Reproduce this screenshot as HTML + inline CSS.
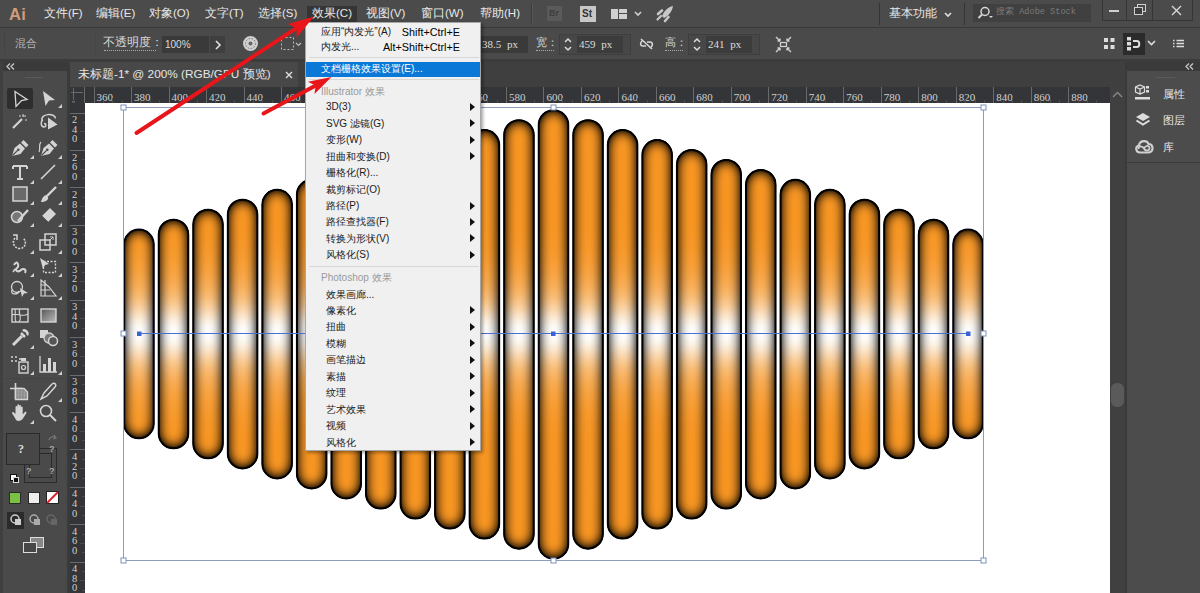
<!DOCTYPE html><html><head><meta charset="utf-8"><style>
*{margin:0;padding:0;box-sizing:border-box}
html,body{width:1200px;height:593px;overflow:hidden;background:#2e2e2e;font-family:"Liberation Sans",sans-serif;}
.abs{position:absolute}
.t{position:absolute;white-space:nowrap;line-height:1}
svg{position:absolute;overflow:visible}
.mi{position:absolute;white-space:nowrap;line-height:1;font-size:10px;color:#000}
.ar{position:absolute;width:0;height:0;border-top:4px solid transparent;border-bottom:4px solid transparent;border-left:5px solid #111}
.rl{position:absolute;font-family:"Liberation Serif",serif;font-size:11px;color:#d0d0d0;line-height:1}
</style></head><body>
<div class="abs" style="left:0;top:0;width:1200px;height:28px;background:#4b4b4b;border-bottom:1px solid #393939"></div>
<div class="t" style="left:9px;top:5.5px;font-size:16.5px;color:#d09c7c;font-weight:bold;letter-spacing:0.3px">Ai</div>
<div class="abs" style="left:307px;top:6px;width:50px;height:17px;background:#353535"></div>
<div class="t" style="left:44px;top:8px;font-size:11.5px;color:#e8e8e8">文件(F)</div>
<div class="t" style="left:96px;top:8px;font-size:11.5px;color:#e8e8e8">编辑(E)</div>
<div class="t" style="left:149px;top:8px;font-size:11.5px;color:#e8e8e8">对象(O)</div>
<div class="t" style="left:205px;top:8px;font-size:11.5px;color:#e8e8e8">文字(T)</div>
<div class="t" style="left:258px;top:8px;font-size:11.5px;color:#e8e8e8">选择(S)</div>
<div class="t" style="left:312px;top:8px;font-size:11.5px;color:#e8e8e8">效果(C)</div>
<div class="t" style="left:366px;top:8px;font-size:11.5px;color:#e8e8e8">视图(V)</div>
<div class="t" style="left:421px;top:8px;font-size:11.5px;color:#e8e8e8">窗口(W)</div>
<div class="t" style="left:480px;top:8px;font-size:11.5px;color:#e8e8e8">帮助(H)</div>
<div class="abs" style="left:531px;top:3px;width:1px;height:22px;background:#3c3c3c"></div><div class="abs" style="left:532px;top:3px;width:1px;height:22px;background:#585858"></div>
<div class="abs" style="left:547px;top:6px;width:15px;height:15px;background:#5a5a5a"></div><div class="t" style="left:549px;top:9px;font-size:9px;color:#3e3e3e;font-weight:bold">Br</div>
<div class="abs" style="left:580px;top:6px;width:16px;height:16px;background:#c8c8c8"></div><div class="t" style="left:582px;top:9px;font-size:10px;color:#333;font-weight:bold">St</div>
<div class="abs" style="left:611px;top:9px;width:7px;height:10px;background:#d0d0d0"></div><div class="abs" style="left:619px;top:9px;width:8px;height:4px;background:#d0d0d0"></div><div class="abs" style="left:619px;top:14px;width:8px;height:5px;background:#d0d0d0"></div>
<svg style="left:634px;top:11px" width="8" height="6"><path d="M1 1 L4 4 L7 1" stroke="#d0d0d0" stroke-width="1.6" fill="none"/></svg>
<svg style="left:656px;top:5px" width="18" height="18"><path d="M17 1 C12 2 8 6 6 11 L8 13 C12 11 16 7 17 1 Z" fill="#c8c8c8"/><path d="M2 9 L6 5.5" stroke="#c8c8c8" stroke-width="2.6" stroke-linecap="round"/><path d="M9 16 L12.5 12" stroke="#c8c8c8" stroke-width="2.6" stroke-linecap="round"/><path d="M1.5 14.5 L5 11" stroke="#c8c8c8" stroke-width="2.2" stroke-linecap="round"/></svg>
<div class="abs" style="left:879px;top:3px;width:1px;height:22px;background:#353535"></div>
<div class="t" style="left:889px;top:8px;font-size:11.5px;color:#e8e8e8">基本功能</div>
<svg style="left:944px;top:12px" width="8" height="6"><path d="M1 1 L4 4 L7 1" stroke="#e0e0e0" stroke-width="1.6" fill="none"/></svg>
<div class="abs" style="left:964px;top:3px;width:1px;height:22px;background:#353535"></div>
<div class="abs" style="left:973px;top:4px;width:118px;height:18px;background:#404040"></div>
<svg style="left:977px;top:6px" width="16" height="14"><circle cx="8" cy="5.5" r="4" stroke="#d8d8d8" stroke-width="1.5" fill="none"/><path d="M5 8.5 L1.5 12" stroke="#d8d8d8" stroke-width="1.8"/><path d="M12 10 L14 12 L16 10" fill="#d8d8d8"/></svg>
<div class="t" style="left:996px;top:8px;font-size:8.6px;color:#7a7a7a;font-family:'Liberation Mono',monospace">搜索 Adobe Stock</div>
<div class="abs" style="left:1102px;top:0;width:25px;height:21px;border:1px solid #363636;border-top:none"></div>
<div class="abs" style="left:1127px;top:0;width:26px;height:21px;border:1px solid #363636;border-top:none;border-left:none"></div>
<div class="abs" style="left:1153px;top:0;width:40px;height:21px;border:1px solid #363636;border-top:none;border-left:none"></div>
<div class="abs" style="left:1109px;top:10px;width:10px;height:2px;background:#cfcfcf"></div>
<svg style="left:1134px;top:4px" width="13" height="12"><rect x="3.5" y="0.5" width="8" height="7" stroke="#cfcfcf" fill="none"/><rect x="0.5" y="3.5" width="8" height="7" stroke="#cfcfcf" fill="#3e3e3e"/></svg>
<svg style="left:1171px;top:5px" width="11" height="11"><path d="M1 1 L10 10 M10 1 L1 10" stroke="#d8d8d8" stroke-width="1.4"/></svg>
<div class="abs" style="left:0;top:28px;width:1200px;height:31px;background:#4a4a4a"></div>
<div class="abs" style="left:0;top:59px;width:1200px;height:3px;background:#3c3c3c"></div>
<div class="abs" style="left:4px;top:32px;width:1px;height:23px;background:#444"></div>
<div class="t" style="left:15px;top:38px;font-size:11px;color:#b4b4b4;font-family:'Liberation Serif',serif">混合</div>
<div class="abs" style="left:95px;top:32px;width:1px;height:23px;background:#464646"></div>
<div class="t" style="left:103px;top:37px;font-size:11.5px;color:#d8d8d8;font-family:'Liberation Serif',serif">不透明度：</div>
<div class="abs" style="left:104px;top:50px;width:52px;height:1px;border-top:1px dotted #aaa"></div>
<div class="abs" style="left:162px;top:36px;width:47px;height:17px;background:#3a3a3a"></div>
<div class="t" style="left:165px;top:39.5px;font-size:10px;color:#dcdcdc">100%</div>
<div class="abs" style="left:210px;top:36px;width:15px;height:17px;background:#3f3f3f"></div>
<svg style="left:214px;top:40px" width="8" height="10"><path d="M2 1 L6 5 L2 9" stroke="#e0e0e0" stroke-width="1.6" fill="none"/></svg>
<svg style="left:242px;top:35px" width="17" height="17"><circle cx="8.5" cy="8.5" r="7.5" fill="#cfcfcf"/><circle cx="8.5" cy="8.5" r="5" fill="none" stroke="#777" stroke-width="1" stroke-dasharray="1.5 1.5"/><circle cx="8.5" cy="8.5" r="2" fill="#666"/></svg>
<svg style="left:280px;top:36px" width="22" height="16"><rect x="1.5" y="1.5" width="12" height="12" fill="none" stroke="#bbb" stroke-dasharray="2 2"/><path d="M16 7 L18.5 9.5 L21 7" stroke="#bbb" fill="none" stroke-width="1.2"/></svg>
<div class="abs" style="left:470px;top:36px;width:58px;height:17px;background:#3a3a3a"></div>
<div class="t" style="left:482px;top:39px;font-size:11px;color:#dcdcdc;font-family:'Liberation Serif',serif;word-spacing:3px">38.5 px</div>
<div class="t" style="left:536px;top:38px;font-size:10.5px;color:#d8d8d8;font-family:'Liberation Serif',serif">宽：</div>
<div class="abs" style="left:536px;top:50px;width:18px;height:1px;border-top:1px dotted #aaa"></div>
<div class="abs" style="left:559px;top:34px;width:72px;height:21px;border:1px solid #3e3e3e;background:#474747"></div>
<svg style="left:563px;top:37px" width="10" height="15"><path d="M2 5 L5 2 L8 5 M2 10 L5 13 L8 10" stroke="#dcdcdc" stroke-width="1.5" fill="none"/></svg>
<div class="abs" style="left:577px;top:36px;width:46px;height:17px;background:#3c3c3c"></div>
<div class="t" style="left:579px;top:39px;font-size:11px;color:#dcdcdc;font-family:'Liberation Serif',serif;word-spacing:3px">459 px</div>
<div class="t" style="left:665px;top:38px;font-size:10.5px;color:#d8d8d8;font-family:'Liberation Serif',serif">高：</div>
<div class="abs" style="left:665px;top:50px;width:18px;height:1px;border-top:1px dotted #aaa"></div>
<div class="abs" style="left:688px;top:34px;width:72px;height:21px;border:1px solid #3e3e3e;background:#474747"></div>
<svg style="left:692px;top:37px" width="10" height="15"><path d="M2 5 L5 2 L8 5 M2 10 L5 13 L8 10" stroke="#dcdcdc" stroke-width="1.5" fill="none"/></svg>
<div class="abs" style="left:706px;top:36px;width:46px;height:17px;background:#3c3c3c"></div>
<div class="t" style="left:708px;top:39px;font-size:11px;color:#dcdcdc;font-family:'Liberation Serif',serif;word-spacing:3px">241 px</div>
<svg style="left:639px;top:37px" width="15" height="14"><path d="M3 4 C1 6 1 9 4 9 L7 9 M8 5 L11 5 C14 5 14 9 12 10 M2 2 L13 12" stroke="#d8d8d8" stroke-width="1.6" fill="none"/></svg>
<svg style="left:775px;top:36px" width="17" height="17"><path d="M1 1 L5 5 M16 1 L12 5 M1 16 L5 12 M16 16 L12 12 M5 5 L5 2.5 M5 5 L2.5 5 M12 5 L14.5 5 M12 5 L12 2.5 M5 12 L5 14.5 M5 12 L2.5 12 M12 12 L14.5 12 M12 12 L12 14.5" stroke="#d0d0d0" stroke-width="1.4" fill="none"/><rect x="5.5" y="6.5" width="6" height="4" fill="none" stroke="#d0d0d0" stroke-width="1.3"/></svg>
<svg style="left:1104px;top:38px" width="11" height="12"><rect x="0" y="0" width="4" height="4" fill="#ddd"/><rect x="6.5" y="0" width="4" height="4" fill="#ddd"/><rect x="0" y="7" width="4" height="4" fill="#ddd"/><rect x="6.5" y="7" width="4" height="4" fill="#ddd"/></svg>
<div class="abs" style="left:1123px;top:33px;width:22px;height:22px;background:#2b2b2b"></div>
<svg style="left:1126px;top:37px" width="16" height="14"><rect x="1" y="0" width="4" height="3.5" fill="#ddd"/><rect x="1" y="5" width="4" height="3.5" fill="#ddd"/><rect x="1" y="10" width="4" height="3.5" fill="#ddd"/><path d="M7 4 L11 4 C14 4 14 10 11 10 L7 10" stroke="#ddd" stroke-width="2" fill="none"/></svg>
<svg style="left:1147px;top:40px" width="9" height="6"><path d="M1 1 L4.5 4.5 L8 1" stroke="#ddd" stroke-width="1.6" fill="none"/></svg>
<svg style="left:1172px;top:39px" width="13" height="10"><path d="M1 1.5h1.5M1 4.5h1.5M1 7.5h1.5M4.5 1.5h7.5M4.5 4.5h7.5M4.5 7.5h7.5" stroke="#ddd" stroke-width="1.4"/></svg>
<div class="abs" style="left:0;top:62px;width:67px;height:531px;background:#4a4a4a"></div>
<div class="abs" style="left:0;top:62px;width:67px;height:9px;background:#3a3a3a"></div>
<div class="abs" style="left:0;top:62px;width:3px;height:531px;background:#404040"></div>
<svg style="left:6px;top:63px" width="9" height="7"><path d="M4 0.5 L1 3.5 L4 6.5 M8 0.5 L5 3.5 L8 6.5" stroke="#c8c8c8" stroke-width="1.3" fill="none"/></svg>
<div class="abs" style="left:25px;top:77px;width:18px;height:1px;background:#5a5a5a"></div>
<div class="abs" style="left:7px;top:88px;width:26px;height:21px;background:#2e2e2e;border-radius:2px"></div>
<div class="abs" style="left:4px;top:378px;width:59px;height:1px;background:#444"></div>
<div class="abs" style="left:67px;top:62px;width:3px;height:531px;background:#3a3a3a"></div>
<div class="abs" style="left:70px;top:62px;width:1055px;height:25px;background:#3f3f3f"></div>
<div class="abs" style="left:70px;top:62px;width:228px;height:25px;background:#484848"></div>
<div class="t" style="left:78px;top:69px;font-size:11.8px;color:#e6e6e6">未标题-1* @ 200% (RGB/GPU 预览)</div>
<svg style="left:285px;top:71px" width="8" height="8"><path d="M1 1 L7 7 M7 1 L1 7" stroke="#e0e0e0" stroke-width="1.4"/></svg>
<div class="abs" style="left:70px;top:87px;width:1040px;height:16px;background:#333538"></div>
<div class="abs" style="left:70px;top:87px;width:15px;height:506px;background:#333538"></div>
<div class="abs" style="left:93.5px;top:87px;width:1px;height:16px;background:#6a6a6a"></div><div class="rl" style="left:96.5px;top:92px">360</div><div class="abs" style="left:102.9px;top:100px;width:1px;height:3px;background:#4c4c4c"></div><div class="abs" style="left:112.2px;top:98px;width:1px;height:5px;background:#4c4c4c"></div><div class="abs" style="left:121.6px;top:100px;width:1px;height:3px;background:#4c4c4c"></div><div class="abs" style="left:131.0px;top:87px;width:1px;height:16px;background:#6a6a6a"></div><div class="rl" style="left:134.0px;top:92px">380</div><div class="abs" style="left:140.4px;top:100px;width:1px;height:3px;background:#4c4c4c"></div><div class="abs" style="left:149.7px;top:98px;width:1px;height:5px;background:#4c4c4c"></div><div class="abs" style="left:159.1px;top:100px;width:1px;height:3px;background:#4c4c4c"></div><div class="abs" style="left:168.5px;top:87px;width:1px;height:16px;background:#6a6a6a"></div><div class="rl" style="left:171.5px;top:92px">400</div><div class="abs" style="left:177.9px;top:100px;width:1px;height:3px;background:#4c4c4c"></div><div class="abs" style="left:187.2px;top:98px;width:1px;height:5px;background:#4c4c4c"></div><div class="abs" style="left:196.6px;top:100px;width:1px;height:3px;background:#4c4c4c"></div><div class="abs" style="left:206.0px;top:87px;width:1px;height:16px;background:#6a6a6a"></div><div class="rl" style="left:209.0px;top:92px">420</div><div class="abs" style="left:215.3px;top:100px;width:1px;height:3px;background:#4c4c4c"></div><div class="abs" style="left:224.7px;top:98px;width:1px;height:5px;background:#4c4c4c"></div><div class="abs" style="left:234.1px;top:100px;width:1px;height:3px;background:#4c4c4c"></div><div class="abs" style="left:243.5px;top:87px;width:1px;height:16px;background:#6a6a6a"></div><div class="rl" style="left:246.5px;top:92px">440</div><div class="abs" style="left:252.8px;top:100px;width:1px;height:3px;background:#4c4c4c"></div><div class="abs" style="left:262.2px;top:98px;width:1px;height:5px;background:#4c4c4c"></div><div class="abs" style="left:271.6px;top:100px;width:1px;height:3px;background:#4c4c4c"></div><div class="abs" style="left:280.9px;top:87px;width:1px;height:16px;background:#6a6a6a"></div><div class="rl" style="left:283.9px;top:92px">460</div><div class="abs" style="left:290.3px;top:100px;width:1px;height:3px;background:#4c4c4c"></div><div class="abs" style="left:299.7px;top:98px;width:1px;height:5px;background:#4c4c4c"></div><div class="abs" style="left:309.1px;top:100px;width:1px;height:3px;background:#4c4c4c"></div><div class="abs" style="left:318.4px;top:87px;width:1px;height:16px;background:#6a6a6a"></div><div class="rl" style="left:321.4px;top:92px">480</div><div class="abs" style="left:327.8px;top:100px;width:1px;height:3px;background:#4c4c4c"></div><div class="abs" style="left:337.2px;top:98px;width:1px;height:5px;background:#4c4c4c"></div><div class="abs" style="left:346.6px;top:100px;width:1px;height:3px;background:#4c4c4c"></div><div class="abs" style="left:355.9px;top:87px;width:1px;height:16px;background:#6a6a6a"></div><div class="rl" style="left:358.9px;top:92px">500</div><div class="abs" style="left:365.3px;top:100px;width:1px;height:3px;background:#4c4c4c"></div><div class="abs" style="left:374.7px;top:98px;width:1px;height:5px;background:#4c4c4c"></div><div class="abs" style="left:384.0px;top:100px;width:1px;height:3px;background:#4c4c4c"></div><div class="abs" style="left:393.4px;top:87px;width:1px;height:16px;background:#6a6a6a"></div><div class="rl" style="left:396.4px;top:92px">520</div><div class="abs" style="left:402.8px;top:100px;width:1px;height:3px;background:#4c4c4c"></div><div class="abs" style="left:412.2px;top:98px;width:1px;height:5px;background:#4c4c4c"></div><div class="abs" style="left:421.5px;top:100px;width:1px;height:3px;background:#4c4c4c"></div><div class="abs" style="left:430.9px;top:87px;width:1px;height:16px;background:#6a6a6a"></div><div class="rl" style="left:433.9px;top:92px">540</div><div class="abs" style="left:440.3px;top:100px;width:1px;height:3px;background:#4c4c4c"></div><div class="abs" style="left:449.7px;top:98px;width:1px;height:5px;background:#4c4c4c"></div><div class="abs" style="left:459.0px;top:100px;width:1px;height:3px;background:#4c4c4c"></div><div class="abs" style="left:468.4px;top:87px;width:1px;height:16px;background:#6a6a6a"></div><div class="rl" style="left:471.4px;top:92px">560</div><div class="abs" style="left:477.8px;top:100px;width:1px;height:3px;background:#4c4c4c"></div><div class="abs" style="left:487.1px;top:98px;width:1px;height:5px;background:#4c4c4c"></div><div class="abs" style="left:496.5px;top:100px;width:1px;height:3px;background:#4c4c4c"></div><div class="abs" style="left:505.9px;top:87px;width:1px;height:16px;background:#6a6a6a"></div><div class="rl" style="left:508.9px;top:92px">580</div><div class="abs" style="left:515.3px;top:100px;width:1px;height:3px;background:#4c4c4c"></div><div class="abs" style="left:524.6px;top:98px;width:1px;height:5px;background:#4c4c4c"></div><div class="abs" style="left:534.0px;top:100px;width:1px;height:3px;background:#4c4c4c"></div><div class="abs" style="left:543.4px;top:87px;width:1px;height:16px;background:#6a6a6a"></div><div class="rl" style="left:546.4px;top:92px">600</div><div class="abs" style="left:552.8px;top:100px;width:1px;height:3px;background:#4c4c4c"></div><div class="abs" style="left:562.1px;top:98px;width:1px;height:5px;background:#4c4c4c"></div><div class="abs" style="left:571.5px;top:100px;width:1px;height:3px;background:#4c4c4c"></div><div class="abs" style="left:580.9px;top:87px;width:1px;height:16px;background:#6a6a6a"></div><div class="rl" style="left:583.9px;top:92px">620</div><div class="abs" style="left:590.2px;top:100px;width:1px;height:3px;background:#4c4c4c"></div><div class="abs" style="left:599.6px;top:98px;width:1px;height:5px;background:#4c4c4c"></div><div class="abs" style="left:609.0px;top:100px;width:1px;height:3px;background:#4c4c4c"></div><div class="abs" style="left:618.4px;top:87px;width:1px;height:16px;background:#6a6a6a"></div><div class="rl" style="left:621.4px;top:92px">640</div><div class="abs" style="left:627.7px;top:100px;width:1px;height:3px;background:#4c4c4c"></div><div class="abs" style="left:637.1px;top:98px;width:1px;height:5px;background:#4c4c4c"></div><div class="abs" style="left:646.5px;top:100px;width:1px;height:3px;background:#4c4c4c"></div><div class="abs" style="left:655.9px;top:87px;width:1px;height:16px;background:#6a6a6a"></div><div class="rl" style="left:658.9px;top:92px">660</div><div class="abs" style="left:665.2px;top:100px;width:1px;height:3px;background:#4c4c4c"></div><div class="abs" style="left:674.6px;top:98px;width:1px;height:5px;background:#4c4c4c"></div><div class="abs" style="left:684.0px;top:100px;width:1px;height:3px;background:#4c4c4c"></div><div class="abs" style="left:693.3px;top:87px;width:1px;height:16px;background:#6a6a6a"></div><div class="rl" style="left:696.3px;top:92px">680</div><div class="abs" style="left:702.7px;top:100px;width:1px;height:3px;background:#4c4c4c"></div><div class="abs" style="left:712.1px;top:98px;width:1px;height:5px;background:#4c4c4c"></div><div class="abs" style="left:721.5px;top:100px;width:1px;height:3px;background:#4c4c4c"></div><div class="abs" style="left:730.8px;top:87px;width:1px;height:16px;background:#6a6a6a"></div><div class="rl" style="left:733.8px;top:92px">700</div><div class="abs" style="left:740.2px;top:100px;width:1px;height:3px;background:#4c4c4c"></div><div class="abs" style="left:749.6px;top:98px;width:1px;height:5px;background:#4c4c4c"></div><div class="abs" style="left:758.9px;top:100px;width:1px;height:3px;background:#4c4c4c"></div><div class="abs" style="left:768.3px;top:87px;width:1px;height:16px;background:#6a6a6a"></div><div class="rl" style="left:771.3px;top:92px">720</div><div class="abs" style="left:777.7px;top:100px;width:1px;height:3px;background:#4c4c4c"></div><div class="abs" style="left:787.1px;top:98px;width:1px;height:5px;background:#4c4c4c"></div><div class="abs" style="left:796.4px;top:100px;width:1px;height:3px;background:#4c4c4c"></div><div class="abs" style="left:805.8px;top:87px;width:1px;height:16px;background:#6a6a6a"></div><div class="rl" style="left:808.8px;top:92px">740</div><div class="abs" style="left:815.2px;top:100px;width:1px;height:3px;background:#4c4c4c"></div><div class="abs" style="left:824.6px;top:98px;width:1px;height:5px;background:#4c4c4c"></div><div class="abs" style="left:833.9px;top:100px;width:1px;height:3px;background:#4c4c4c"></div><div class="abs" style="left:843.3px;top:87px;width:1px;height:16px;background:#6a6a6a"></div><div class="rl" style="left:846.3px;top:92px">760</div><div class="abs" style="left:852.7px;top:100px;width:1px;height:3px;background:#4c4c4c"></div><div class="abs" style="left:862.0px;top:98px;width:1px;height:5px;background:#4c4c4c"></div><div class="abs" style="left:871.4px;top:100px;width:1px;height:3px;background:#4c4c4c"></div><div class="abs" style="left:880.8px;top:87px;width:1px;height:16px;background:#6a6a6a"></div><div class="rl" style="left:883.8px;top:92px">780</div><div class="abs" style="left:890.2px;top:100px;width:1px;height:3px;background:#4c4c4c"></div><div class="abs" style="left:899.5px;top:98px;width:1px;height:5px;background:#4c4c4c"></div><div class="abs" style="left:908.9px;top:100px;width:1px;height:3px;background:#4c4c4c"></div><div class="abs" style="left:918.3px;top:87px;width:1px;height:16px;background:#6a6a6a"></div><div class="rl" style="left:921.3px;top:92px">800</div><div class="abs" style="left:927.7px;top:100px;width:1px;height:3px;background:#4c4c4c"></div><div class="abs" style="left:937.0px;top:98px;width:1px;height:5px;background:#4c4c4c"></div><div class="abs" style="left:946.4px;top:100px;width:1px;height:3px;background:#4c4c4c"></div><div class="abs" style="left:955.8px;top:87px;width:1px;height:16px;background:#6a6a6a"></div><div class="rl" style="left:958.8px;top:92px">820</div><div class="abs" style="left:965.1px;top:100px;width:1px;height:3px;background:#4c4c4c"></div><div class="abs" style="left:974.5px;top:98px;width:1px;height:5px;background:#4c4c4c"></div><div class="abs" style="left:983.9px;top:100px;width:1px;height:3px;background:#4c4c4c"></div><div class="abs" style="left:993.3px;top:87px;width:1px;height:16px;background:#6a6a6a"></div><div class="rl" style="left:996.3px;top:92px">840</div><div class="abs" style="left:1002.6px;top:100px;width:1px;height:3px;background:#4c4c4c"></div><div class="abs" style="left:1012.0px;top:98px;width:1px;height:5px;background:#4c4c4c"></div><div class="abs" style="left:1021.4px;top:100px;width:1px;height:3px;background:#4c4c4c"></div><div class="abs" style="left:1030.8px;top:87px;width:1px;height:16px;background:#6a6a6a"></div><div class="rl" style="left:1033.8px;top:92px">860</div><div class="abs" style="left:1040.1px;top:100px;width:1px;height:3px;background:#4c4c4c"></div><div class="abs" style="left:1049.5px;top:98px;width:1px;height:5px;background:#4c4c4c"></div><div class="abs" style="left:1058.9px;top:100px;width:1px;height:3px;background:#4c4c4c"></div><div class="abs" style="left:1068.2px;top:87px;width:1px;height:16px;background:#6a6a6a"></div><div class="rl" style="left:1071.2px;top:92px">880</div><div class="abs" style="left:1077.6px;top:100px;width:1px;height:3px;background:#4c4c4c"></div><div class="abs" style="left:1087.0px;top:98px;width:1px;height:5px;background:#4c4c4c"></div><div class="abs" style="left:1096.4px;top:100px;width:1px;height:3px;background:#4c4c4c"></div><div class="abs" style="left:70px;top:112.6px;width:15px;height:1px;background:#6a6a6a"></div><div class="rl" style="left:72px;top:115.1px;font-size:10.5px">2</div><div class="rl" style="left:72px;top:124.7px;font-size:10.5px">4</div><div class="rl" style="left:72px;top:134.3px;font-size:10.5px">0</div><div class="abs" style="left:82px;top:122.0px;width:3px;height:1px;background:#4c4c4c"></div><div class="abs" style="left:80px;top:131.3px;width:5px;height:1px;background:#4c4c4c"></div><div class="abs" style="left:82px;top:140.7px;width:3px;height:1px;background:#4c4c4c"></div><div class="abs" style="left:70px;top:150.0px;width:15px;height:1px;background:#6a6a6a"></div><div class="rl" style="left:72px;top:152.5px;font-size:10.5px">2</div><div class="rl" style="left:72px;top:162.1px;font-size:10.5px">6</div><div class="rl" style="left:72px;top:171.7px;font-size:10.5px">0</div><div class="abs" style="left:82px;top:159.4px;width:3px;height:1px;background:#4c4c4c"></div><div class="abs" style="left:80px;top:168.7px;width:5px;height:1px;background:#4c4c4c"></div><div class="abs" style="left:82px;top:178.1px;width:3px;height:1px;background:#4c4c4c"></div><div class="abs" style="left:70px;top:187.4px;width:15px;height:1px;background:#6a6a6a"></div><div class="rl" style="left:72px;top:189.9px;font-size:10.5px">2</div><div class="rl" style="left:72px;top:199.5px;font-size:10.5px">8</div><div class="rl" style="left:72px;top:209.1px;font-size:10.5px">0</div><div class="abs" style="left:82px;top:196.8px;width:3px;height:1px;background:#4c4c4c"></div><div class="abs" style="left:80px;top:206.2px;width:5px;height:1px;background:#4c4c4c"></div><div class="abs" style="left:82px;top:215.5px;width:3px;height:1px;background:#4c4c4c"></div><div class="abs" style="left:70px;top:224.9px;width:15px;height:1px;background:#6a6a6a"></div><div class="rl" style="left:72px;top:227.4px;font-size:10.5px">3</div><div class="rl" style="left:72px;top:237.0px;font-size:10.5px">0</div><div class="rl" style="left:72px;top:246.6px;font-size:10.5px">0</div><div class="abs" style="left:82px;top:234.2px;width:3px;height:1px;background:#4c4c4c"></div><div class="abs" style="left:80px;top:243.6px;width:5px;height:1px;background:#4c4c4c"></div><div class="abs" style="left:82px;top:252.9px;width:3px;height:1px;background:#4c4c4c"></div><div class="abs" style="left:70px;top:262.3px;width:15px;height:1px;background:#6a6a6a"></div><div class="rl" style="left:72px;top:264.8px;font-size:10.5px">3</div><div class="rl" style="left:72px;top:274.4px;font-size:10.5px">2</div><div class="rl" style="left:72px;top:284.0px;font-size:10.5px">0</div><div class="abs" style="left:82px;top:271.6px;width:3px;height:1px;background:#4c4c4c"></div><div class="abs" style="left:80px;top:281.0px;width:5px;height:1px;background:#4c4c4c"></div><div class="abs" style="left:82px;top:290.4px;width:3px;height:1px;background:#4c4c4c"></div><div class="abs" style="left:70px;top:299.7px;width:15px;height:1px;background:#6a6a6a"></div><div class="rl" style="left:72px;top:302.2px;font-size:10.5px">3</div><div class="rl" style="left:72px;top:311.8px;font-size:10.5px">4</div><div class="rl" style="left:72px;top:321.4px;font-size:10.5px">0</div><div class="abs" style="left:82px;top:309.1px;width:3px;height:1px;background:#4c4c4c"></div><div class="abs" style="left:80px;top:318.4px;width:5px;height:1px;background:#4c4c4c"></div><div class="abs" style="left:82px;top:327.8px;width:3px;height:1px;background:#4c4c4c"></div><div class="abs" style="left:70px;top:337.1px;width:15px;height:1px;background:#6a6a6a"></div><div class="rl" style="left:72px;top:339.6px;font-size:10.5px">3</div><div class="rl" style="left:72px;top:349.2px;font-size:10.5px">6</div><div class="rl" style="left:72px;top:358.8px;font-size:10.5px">0</div><div class="abs" style="left:82px;top:346.5px;width:3px;height:1px;background:#4c4c4c"></div><div class="abs" style="left:80px;top:355.8px;width:5px;height:1px;background:#4c4c4c"></div><div class="abs" style="left:82px;top:365.2px;width:3px;height:1px;background:#4c4c4c"></div><div class="abs" style="left:70px;top:374.5px;width:15px;height:1px;background:#6a6a6a"></div><div class="rl" style="left:72px;top:377.0px;font-size:10.5px">3</div><div class="rl" style="left:72px;top:386.6px;font-size:10.5px">8</div><div class="rl" style="left:72px;top:396.2px;font-size:10.5px">0</div><div class="abs" style="left:82px;top:383.9px;width:3px;height:1px;background:#4c4c4c"></div><div class="abs" style="left:80px;top:393.3px;width:5px;height:1px;background:#4c4c4c"></div><div class="abs" style="left:82px;top:402.6px;width:3px;height:1px;background:#4c4c4c"></div><div class="abs" style="left:70px;top:412.0px;width:15px;height:1px;background:#6a6a6a"></div><div class="rl" style="left:72px;top:414.5px;font-size:10.5px">4</div><div class="rl" style="left:72px;top:424.1px;font-size:10.5px">0</div><div class="rl" style="left:72px;top:433.7px;font-size:10.5px">0</div><div class="abs" style="left:82px;top:421.3px;width:3px;height:1px;background:#4c4c4c"></div><div class="abs" style="left:80px;top:430.7px;width:5px;height:1px;background:#4c4c4c"></div><div class="abs" style="left:82px;top:440.0px;width:3px;height:1px;background:#4c4c4c"></div><div class="abs" style="left:70px;top:449.4px;width:15px;height:1px;background:#6a6a6a"></div><div class="rl" style="left:72px;top:451.9px;font-size:10.5px">4</div><div class="rl" style="left:72px;top:461.5px;font-size:10.5px">2</div><div class="rl" style="left:72px;top:471.1px;font-size:10.5px">0</div><div class="abs" style="left:82px;top:458.7px;width:3px;height:1px;background:#4c4c4c"></div><div class="abs" style="left:80px;top:468.1px;width:5px;height:1px;background:#4c4c4c"></div><div class="abs" style="left:82px;top:477.5px;width:3px;height:1px;background:#4c4c4c"></div><div class="abs" style="left:70px;top:486.8px;width:15px;height:1px;background:#6a6a6a"></div><div class="rl" style="left:72px;top:489.3px;font-size:10.5px">4</div><div class="rl" style="left:72px;top:498.9px;font-size:10.5px">4</div><div class="rl" style="left:72px;top:508.5px;font-size:10.5px">0</div><div class="abs" style="left:82px;top:496.2px;width:3px;height:1px;background:#4c4c4c"></div><div class="abs" style="left:80px;top:505.5px;width:5px;height:1px;background:#4c4c4c"></div><div class="abs" style="left:82px;top:514.9px;width:3px;height:1px;background:#4c4c4c"></div><div class="abs" style="left:70px;top:524.2px;width:15px;height:1px;background:#6a6a6a"></div><div class="rl" style="left:72px;top:526.7px;font-size:10.5px">4</div><div class="rl" style="left:72px;top:536.3px;font-size:10.5px">6</div><div class="rl" style="left:72px;top:545.9px;font-size:10.5px">0</div><div class="abs" style="left:82px;top:533.6px;width:3px;height:1px;background:#4c4c4c"></div><div class="abs" style="left:80px;top:542.9px;width:5px;height:1px;background:#4c4c4c"></div><div class="abs" style="left:82px;top:552.3px;width:3px;height:1px;background:#4c4c4c"></div><div class="abs" style="left:70px;top:561.6px;width:15px;height:1px;background:#6a6a6a"></div><div class="rl" style="left:72px;top:564.1px;font-size:10.5px">4</div><div class="rl" style="left:72px;top:573.7px;font-size:10.5px">8</div><div class="rl" style="left:72px;top:583.3px;font-size:10.5px">0</div><div class="abs" style="left:82px;top:571.0px;width:3px;height:1px;background:#4c4c4c"></div><div class="abs" style="left:80px;top:580.4px;width:5px;height:1px;background:#4c4c4c"></div><div class="abs" style="left:82px;top:589.7px;width:3px;height:1px;background:#4c4c4c"></div>
<div class="abs" style="left:70px;top:87px;width:15px;height:16px;background:#333538"></div>
<svg style="left:70px;top:87px" width="15" height="16"><path d="M3.5 1 V13 M1 5.5 H13 M14.5 0 V16" stroke="#6a6a6a" stroke-width="1"/><path d="M2 14.5 Q3.5 16 5 14.5" stroke="#888" stroke-width="1" fill="none"/></svg>
<div class="abs" style="left:85px;top:103px;width:1025px;height:490px;background:#ffffff"></div>
<div class="abs" style="left:1110px;top:87px;width:15px;height:506px;background:#404040"></div>
<svg style="left:1112px;top:90px" width="11" height="10"><path d="M1 7 L5.5 2.5 L10 7" stroke="#888" stroke-width="1.3" fill="none"/></svg>
<div class="abs" style="left:1111px;top:383px;width:13px;height:24px;background:#5a5a5a;border-radius:6px"></div>
<div class="abs" style="left:1125px;top:62px;width:2px;height:531px;background:#3a3a3a"></div>
<div class="abs" style="left:1127px;top:62px;width:73px;height:531px;background:#4c4c4c"></div>
<div class="abs" style="left:1127px;top:62px;width:73px;height:9px;background:#3a3a3a"></div>
<svg style="left:1185px;top:63px" width="9" height="7"><path d="M4 0.5 L1 3.5 L4 6.5 M8 0.5 L5 3.5 L8 6.5" stroke="#c8c8c8" stroke-width="1.3" fill="none"/></svg>
<div class="abs" style="left:1155px;top:77px;width:20px;height:1px;background:#5a5a5a"></div>
<div class="abs" style="left:1127px;top:162px;width:73px;height:1px;background:#3a3a3a"></div>
<div class="t" style="left:1163px;top:89px;font-size:11.2px;color:#e8e8e8">属性</div>
<div class="t" style="left:1163px;top:115px;font-size:11.2px;color:#e8e8e8">图层</div>
<div class="t" style="left:1163px;top:141.5px;font-size:11.2px;color:#e8e8e8">库</div>
<svg style="left:1135px;top:84px" width="16" height="18"><path d="M5 1 L9.5 3 L9.5 8 L5 10 L0.5 8 L0.5 3 Z M0.5 3 L5 5 L9.5 3 M5 5 V10" stroke="#ddd" stroke-width="1.2" fill="none"/><rect x="11" y="2" width="3" height="2.5" fill="#ddd"/><rect x="11" y="6" width="3" height="2.5" fill="#ddd"/><rect x="0" y="13" width="15" height="2.5" fill="#ddd"/></svg>
<svg style="left:1135px;top:112px" width="16" height="16"><path d="M8 1 L15 5 L8 9 L1 5 Z" fill="#ddd"/><path d="M1.5 8.5 L8 12.5 L14.5 8.5" stroke="#ddd" stroke-width="2" fill="none"/></svg>
<svg style="left:1134px;top:139px" width="20" height="15"><path d="M6 13.5 C1.5 13.5 0.8 7 5 6.5 C5.5 1.5 13 0.5 14.5 5 C19.5 4.5 20 12.5 15 13.5 Z" stroke="#d0d0d0" stroke-width="2.2" fill="none"/><path d="M4.5 10 C4.5 6.5 8.5 6.5 10 9.5 C11.5 12.5 15.5 12 15.5 9 C15.5 6 11.5 6 10 9.5" stroke="#d0d0d0" stroke-width="1.8" fill="none"/></svg>
<svg width="1200" height="593" style="left:0;top:0" viewBox="0 0 1200 593"><defs>
<linearGradient id="vg" x1="0" y1="0" x2="0" y2="593" gradientUnits="userSpaceOnUse"><stop offset="0.0000" stop-color="#f99622"/><stop offset="0.3761" stop-color="#f99724"/><stop offset="0.3845" stop-color="#f99724"/><stop offset="0.3929" stop-color="#f99825"/><stop offset="0.4013" stop-color="#f99827"/><stop offset="0.4098" stop-color="#f99929"/><stop offset="0.4182" stop-color="#f99a2b"/><stop offset="0.4266" stop-color="#f99c2e"/><stop offset="0.4351" stop-color="#f99d32"/><stop offset="0.4435" stop-color="#faa036"/><stop offset="0.4519" stop-color="#faa23c"/><stop offset="0.4604" stop-color="#faa542"/><stop offset="0.4688" stop-color="#faa94a"/><stop offset="0.4772" stop-color="#faad53"/><stop offset="0.4857" stop-color="#fbb25e"/><stop offset="0.4941" stop-color="#fbb96b"/><stop offset="0.5025" stop-color="#fbc07b"/><stop offset="0.5110" stop-color="#fcca8e"/><stop offset="0.5194" stop-color="#fdd4a5"/><stop offset="0.5278" stop-color="#fde0be"/><stop offset="0.5363" stop-color="#feecd6"/><stop offset="0.5447" stop-color="#fef6eb"/><stop offset="0.5531" stop-color="#fffdfa"/><stop offset="0.5616" stop-color="#ffffff"/><stop offset="0.5700" stop-color="#fffdfa"/><stop offset="0.5784" stop-color="#fef6eb"/><stop offset="0.5868" stop-color="#feecd6"/><stop offset="0.5953" stop-color="#fde0be"/><stop offset="0.6037" stop-color="#fdd4a5"/><stop offset="0.6121" stop-color="#fcca8e"/><stop offset="0.6206" stop-color="#fbc07b"/><stop offset="0.6290" stop-color="#fbb96b"/><stop offset="0.6374" stop-color="#fbb25e"/><stop offset="0.6459" stop-color="#faad53"/><stop offset="0.6543" stop-color="#faa94a"/><stop offset="0.6627" stop-color="#faa542"/><stop offset="0.6712" stop-color="#faa23c"/><stop offset="0.6796" stop-color="#faa036"/><stop offset="0.6880" stop-color="#f99d32"/><stop offset="0.6965" stop-color="#f99c2e"/><stop offset="0.7049" stop-color="#f99a2b"/><stop offset="0.7133" stop-color="#f99929"/><stop offset="0.7218" stop-color="#f99827"/><stop offset="0.7302" stop-color="#f99825"/><stop offset="0.7386" stop-color="#f99724"/><stop offset="0.7470" stop-color="#f99724"/><stop offset="1.0000" stop-color="#f99622"/></linearGradient>
<filter id="ig" x="-20%" y="-20%" width="140%" height="140%" color-interpolation-filters="sRGB">
<feGaussianBlur in="SourceAlpha" stdDeviation="6.5" result="b"/>
<feComposite in="SourceAlpha" in2="b" operator="arithmetic" k2="1.6" k3="-1.6" result="e"/>
<feFlood flood-color="#000" flood-opacity="1"/>
<feComposite in2="e" operator="in" result="s"/>
<feMerge><feMergeNode in="SourceGraphic"/><feMergeNode in="s"/></feMerge>
</filter>
</defs><rect x="124.20" y="229.60" width="29.50" height="208.70" rx="14.75" fill="url(#vg)" stroke="#0c0c30" stroke-width="2" filter="url(#ig)"/><rect x="158.75" y="219.65" width="29.50" height="228.68" rx="14.75" fill="url(#vg)" stroke="#000" stroke-width="2" filter="url(#ig)"/><rect x="193.29" y="209.70" width="29.50" height="248.66" rx="14.75" fill="url(#vg)" stroke="#000" stroke-width="2" filter="url(#ig)"/><rect x="227.84" y="199.75" width="29.50" height="268.64" rx="14.75" fill="url(#vg)" stroke="#000" stroke-width="2" filter="url(#ig)"/><rect x="262.38" y="189.80" width="29.50" height="288.62" rx="14.75" fill="url(#vg)" stroke="#000" stroke-width="2" filter="url(#ig)"/><rect x="296.93" y="179.85" width="29.50" height="308.60" rx="14.75" fill="url(#vg)" stroke="#000" stroke-width="2" filter="url(#ig)"/><rect x="331.48" y="169.90" width="29.50" height="328.58" rx="14.75" fill="url(#vg)" stroke="#000" stroke-width="2" filter="url(#ig)"/><rect x="366.02" y="159.95" width="29.50" height="348.56" rx="14.75" fill="url(#vg)" stroke="#000" stroke-width="2" filter="url(#ig)"/><rect x="400.57" y="150.00" width="29.50" height="368.54" rx="14.75" fill="url(#vg)" stroke="#000" stroke-width="2" filter="url(#ig)"/><rect x="435.11" y="140.05" width="29.50" height="388.52" rx="14.75" fill="url(#vg)" stroke="#000" stroke-width="2" filter="url(#ig)"/><rect x="469.66" y="130.10" width="29.50" height="408.50" rx="14.75" fill="url(#vg)" stroke="#000" stroke-width="2" filter="url(#ig)"/><rect x="504.21" y="120.15" width="29.50" height="428.48" rx="14.75" fill="url(#vg)" stroke="#000" stroke-width="2" filter="url(#ig)"/><rect x="538.75" y="110.20" width="29.50" height="448.46" rx="14.75" fill="url(#vg)" stroke="#0c0c30" stroke-width="2" filter="url(#ig)"/><rect x="573.30" y="120.15" width="29.50" height="428.48" rx="14.75" fill="url(#vg)" stroke="#000" stroke-width="2" filter="url(#ig)"/><rect x="607.84" y="130.10" width="29.50" height="408.50" rx="14.75" fill="url(#vg)" stroke="#000" stroke-width="2" filter="url(#ig)"/><rect x="642.39" y="140.05" width="29.50" height="388.52" rx="14.75" fill="url(#vg)" stroke="#000" stroke-width="2" filter="url(#ig)"/><rect x="676.94" y="150.00" width="29.50" height="368.54" rx="14.75" fill="url(#vg)" stroke="#000" stroke-width="2" filter="url(#ig)"/><rect x="711.48" y="159.95" width="29.50" height="348.56" rx="14.75" fill="url(#vg)" stroke="#000" stroke-width="2" filter="url(#ig)"/><rect x="746.03" y="169.90" width="29.50" height="328.58" rx="14.75" fill="url(#vg)" stroke="#000" stroke-width="2" filter="url(#ig)"/><rect x="780.57" y="179.85" width="29.50" height="308.60" rx="14.75" fill="url(#vg)" stroke="#000" stroke-width="2" filter="url(#ig)"/><rect x="815.12" y="189.80" width="29.50" height="288.62" rx="14.75" fill="url(#vg)" stroke="#000" stroke-width="2" filter="url(#ig)"/><rect x="849.67" y="199.75" width="29.50" height="268.64" rx="14.75" fill="url(#vg)" stroke="#000" stroke-width="2" filter="url(#ig)"/><rect x="884.21" y="209.70" width="29.50" height="248.66" rx="14.75" fill="url(#vg)" stroke="#000" stroke-width="2" filter="url(#ig)"/><rect x="918.76" y="219.65" width="29.50" height="228.68" rx="14.75" fill="url(#vg)" stroke="#000" stroke-width="2" filter="url(#ig)"/><rect x="953.30" y="229.60" width="29.50" height="208.70" rx="14.75" fill="url(#vg)" stroke="#0c0c30" stroke-width="2" filter="url(#ig)"/><rect x="123.5" y="107.5" width="860" height="453" fill="none" stroke="#8d9cb8" stroke-width="1"/><path d="M139 333.5 H968" stroke="#4a6fd0" stroke-width="1"/><rect x="121.0" y="105.0" width="5" height="5" fill="#fff" stroke="#7d92bd" stroke-width="1"/><rect x="551.0" y="105.0" width="5" height="5" fill="#fff" stroke="#7d92bd" stroke-width="1"/><rect x="981.0" y="105.0" width="5" height="5" fill="#fff" stroke="#7d92bd" stroke-width="1"/><rect x="121.0" y="331.0" width="5" height="5" fill="#fff" stroke="#7d92bd" stroke-width="1"/><rect x="981.0" y="331.0" width="5" height="5" fill="#fff" stroke="#7d92bd" stroke-width="1"/><rect x="121.0" y="558.0" width="5" height="5" fill="#fff" stroke="#7d92bd" stroke-width="1"/><rect x="551.0" y="558.0" width="5" height="5" fill="#fff" stroke="#7d92bd" stroke-width="1"/><rect x="981.0" y="558.0" width="5" height="5" fill="#fff" stroke="#7d92bd" stroke-width="1"/><rect x="137" y="331.5" width="4.5" height="4.5" fill="#3a62d6"/><rect x="551" y="331.5" width="4.5" height="4.5" fill="#3a62d6"/><rect x="966" y="331.5" width="4.5" height="4.5" fill="#3a62d6"/></svg>
<svg style="left:13px;top:90px" width="16" height="18"><path d="M2 1.5 L14 9.5 L8.5 10.5 L3 16.5 Z" fill="none" stroke="#d4d4d4" stroke-width="1.3"/></svg><svg style="left:41px;top:90px" width="16" height="17"><path d="M2 1 L14 10 L8 10.5 L4.5 16 Z" fill="#d4d4d4"/></svg><svg style="left:58px;top:104px" width="4" height="4"><path d="M4 0 L4 4 L0 4 Z" fill="#cfcfcf"/></svg><svg style="left:11px;top:113px" width="17" height="17"><path d="M2 15 L11 6" stroke="#d4d4d4" stroke-width="2.2"/><path d="M12 1v3M15 3h-3M8 3h2M14 7h2" stroke="#d4d4d4" stroke-width="1"/></svg><svg style="left:38px;top:112px" width="21" height="19"><path d="M4 8.5 C2 1.5 17 0.5 17.5 6.5" stroke="#d4d4d4" stroke-width="1.5" fill="none"/><path d="M5 8 C2.5 9 2.5 15 6 15 C8.5 15 8.5 11.5 6 11.5" stroke="#d4d4d4" stroke-width="1.4" fill="none"/><path d="M10 5.5 L19.5 12.5 L10 17.5 Z" fill="#d4d4d4"/></svg><svg style="left:11px;top:139px" width="19" height="18"><path d="M1 17 L3.5 9 L9 4.5 L14 9.5 L9.5 15 Z" fill="#d4d4d4"/><path d="M1.5 16.5 L6.5 11.5" stroke="#4a4a4a" stroke-width="1.1"/><circle cx="7.3" cy="10.7" r="1.3" fill="#4a4a4a"/><path d="M10 3.5 L12.5 1 L17.5 6 L15 8.5 Z" fill="#d4d4d4"/></svg><svg style="left:30px;top:155px" width="4" height="4"><path d="M4 0 L4 4 L0 4 Z" fill="#cfcfcf"/></svg><svg style="left:37px;top:139px" width="21" height="18"><path d="M4 17 L6.5 9 L12 4.5 L17 9.5 L12.5 15 Z" fill="#d4d4d4"/><path d="M4.5 16.5 L9.5 11.5" stroke="#4a4a4a" stroke-width="1.1"/><circle cx="10.3" cy="10.7" r="1.3" fill="#4a4a4a"/><path d="M13 3.5 L15.5 1 L20.5 6 L18 8.5 Z" fill="#d4d4d4"/><path d="M4 3 C1 6 4 9 2 13" stroke="#d4d4d4" stroke-width="1.2" fill="none"/></svg><svg style="left:58px;top:155px" width="4" height="4"><path d="M4 0 L4 4 L0 4 Z" fill="#cfcfcf"/></svg><svg style="left:12px;top:164px" width="16" height="16"><path d="M1 2 H15 M8 2 V15 M5 15 H11 M1 2 V5 M15 2 V5" stroke="#d4d4d4" stroke-width="2" fill="none"/></svg><svg style="left:30px;top:180px" width="4" height="4"><path d="M4 0 L4 4 L0 4 Z" fill="#cfcfcf"/></svg><svg style="left:40px;top:164px" width="16" height="16"><path d="M1 15 L15 1" stroke="#d4d4d4" stroke-width="1.6"/></svg><svg style="left:58px;top:180px" width="4" height="4"><path d="M4 0 L4 4 L0 4 Z" fill="#cfcfcf"/></svg><svg style="left:12px;top:186px" width="16" height="16"><rect x="1" y="1" width="14" height="14" fill="#6a6a6a" stroke="#d4d4d4" stroke-width="1.5"/></svg><svg style="left:30px;top:201px" width="4" height="4"><path d="M4 0 L4 4 L0 4 Z" fill="#cfcfcf"/></svg><svg style="left:40px;top:186px" width="17" height="17"><path d="M16 1 L7 10" stroke="#d4d4d4" stroke-width="2.4"/><path d="M7 9 C3 9 2 13 1 16 C5 16 9 14 8 11 Z" fill="#d4d4d4"/></svg><svg style="left:58px;top:201px" width="4" height="4"><path d="M4 0 L4 4 L0 4 Z" fill="#cfcfcf"/></svg><svg style="left:10px;top:207px" width="20" height="17"><circle cx="7" cy="10" r="5.5" fill="#777" stroke="#d4d4d4" stroke-width="1.5"/><path d="M8 14 L18 3" stroke="#d4d4d4" stroke-width="2.4"/></svg><svg style="left:30px;top:223px" width="4" height="4"><path d="M4 0 L4 4 L0 4 Z" fill="#cfcfcf"/></svg><svg style="left:40px;top:207px" width="17" height="17"><path d="M10 1 L16 7 L8 15 L2 9 Z" fill="#d4d4d4"/><path d="M2 9 L8 15" stroke="#555" stroke-width="1"/></svg><svg style="left:58px;top:223px" width="4" height="4"><path d="M4 0 L4 4 L0 4 Z" fill="#cfcfcf"/></svg><svg style="left:11px;top:234px" width="17" height="17"><path d="M4 4 C1 7 2 14 8.5 14.5 C15 14.5 16 7 12 4" stroke="#d4d4d4" stroke-width="1.6" fill="none" stroke-dasharray="2 1.2"/><path d="M2 1 L6 1 L6 6" stroke="#d4d4d4" stroke-width="1.5" fill="none"/></svg><svg style="left:30px;top:250px" width="4" height="4"><path d="M4 0 L4 4 L0 4 Z" fill="#cfcfcf"/></svg><svg style="left:39px;top:233px" width="19" height="18"><rect x="1" y="7" width="10" height="10" fill="none" stroke="#d4d4d4" stroke-width="1.5"/><rect x="6" y="1" width="11" height="11" fill="none" stroke="#d4d4d4" stroke-width="1.5"/><path d="M10 8 L14 4 M11 4 H14 V7" stroke="#d4d4d4" stroke-width="1"/></svg><svg style="left:58px;top:250px" width="4" height="4"><path d="M4 0 L4 4 L0 4 Z" fill="#cfcfcf"/></svg><svg style="left:11px;top:257px" width="18" height="18"><path d="M3 8 C6 2 9 9 6 11 C3 13 7 16 10 13 C12 11 16 12 14 16" stroke="#d4d4d4" stroke-width="2" fill="none"/><path d="M2 15 L4 12" stroke="#d4d4d4" stroke-width="1.5"/></svg><svg style="left:30px;top:273px" width="4" height="4"><path d="M4 0 L4 4 L0 4 Z" fill="#cfcfcf"/></svg><svg style="left:39px;top:257px" width="19" height="18"><rect x="4.5" y="4.5" width="12" height="11" fill="none" stroke="#d4d4d4" stroke-width="1.3" stroke-dasharray="2 1.5"/><path d="M1 1 L10 7 L6 8 L4 12 Z" fill="#d4d4d4"/></svg><svg style="left:58px;top:273px" width="4" height="4"><path d="M4 0 L4 4 L0 4 Z" fill="#cfcfcf"/></svg><svg style="left:10px;top:280px" width="20" height="18"><circle cx="7" cy="7" r="5.5" fill="none" stroke="#d4d4d4" stroke-width="1.3"/><path d="M2 10 C0 15 8 15 9 11" stroke="#d4d4d4" stroke-width="1.3" fill="none"/><path d="M10 8 L18 13 L14 13.5 L12 17 Z" fill="#d4d4d4"/></svg><svg style="left:30px;top:296px" width="4" height="4"><path d="M4 0 L4 4 L0 4 Z" fill="#cfcfcf"/></svg><svg style="left:39px;top:279px" width="19" height="19"><path d="M2 1 L2 17 L17 17 L10 8 Z M2 6 L7 6 M2 11 L11 11 M6 1 L6 17" stroke="#d4d4d4" stroke-width="1.2" fill="none"/></svg><svg style="left:58px;top:296px" width="4" height="4"><path d="M4 0 L4 4 L0 4 Z" fill="#cfcfcf"/></svg><svg style="left:11px;top:308px" width="18" height="15"><rect x="1" y="1" width="16" height="13" fill="none" stroke="#d4d4d4" stroke-width="1.4"/><path d="M1 7 C6 4 11 10 17 6 M9 1 C6 5 12 9 8 14 M4 1 C5 6 3 9 5 14" stroke="#d4d4d4" stroke-width="1.1" fill="none"/></svg><svg style="left:40px;top:308px" width="17" height="15"><defs><linearGradient id="tg" x1="0" y1="0" x2="1" y2="1"><stop offset="0" stop-color="#555"/><stop offset="1" stop-color="#bbb"/></linearGradient></defs><rect x="1" y="1" width="15" height="13" fill="url(#tg)" stroke="#d4d4d4" stroke-width="1.4"/></svg><svg style="left:11px;top:329px" width="18" height="18"><path d="M2 16 L11 7" stroke="#d4d4d4" stroke-width="3"/><path d="M10 4 L14 8 M12 2 C14 0 18 4 16 6" stroke="#d4d4d4" stroke-width="2.5" fill="none"/></svg><svg style="left:30px;top:345px" width="4" height="4"><path d="M4 0 L4 4 L0 4 Z" fill="#cfcfcf"/></svg><svg style="left:39px;top:329px" width="20" height="18"><rect x="1" y="1" width="8" height="8" fill="#d4d4d4"/><circle cx="10" cy="9" r="5" fill="#777" stroke="#d4d4d4" stroke-width="1.3"/><circle cx="14" cy="12" r="4.5" fill="#555" stroke="#d4d4d4" stroke-width="1.5"/></svg><svg style="left:10px;top:355px" width="20" height="19"><path d="M1 2h2M5 2h2M1 6h2M5 6h2M9 4h2" stroke="#d4d4d4" stroke-width="1.6"/><rect x="9" y="7" width="9" height="11" fill="none" stroke="#d4d4d4" stroke-width="1.4"/><circle cx="13.5" cy="12.5" r="2" fill="none" stroke="#d4d4d4" stroke-width="1.2"/><rect x="11" y="3" width="5" height="3" fill="#d4d4d4"/></svg><svg style="left:30px;top:371px" width="4" height="4"><path d="M4 0 L4 4 L0 4 Z" fill="#cfcfcf"/></svg><svg style="left:39px;top:355px" width="19" height="18"><path d="M1 1 V17 H18" stroke="#d4d4d4" stroke-width="1.3" fill="none"/><rect x="4" y="9" width="3" height="8" fill="#d4d4d4"/><rect x="9" y="3" width="3" height="14" fill="#d4d4d4"/><rect x="14" y="7" width="3" height="10" fill="#d4d4d4"/></svg><svg style="left:58px;top:371px" width="4" height="4"><path d="M4 0 L4 4 L0 4 Z" fill="#cfcfcf"/></svg><svg style="left:9px;top:382px" width="20" height="19"><path d="M6.5 1 V17 M1 6.5 H13" stroke="#d4d4d4" stroke-width="1.6"/><path d="M6.5 6.5 H15 L18.5 10 V17.5 H6.5 Z" fill="#8a8a8a" stroke="#d4d4d4" stroke-width="1.4"/><path d="M9.5 7 V17 M12.5 7 V17 M15.5 9 V17 M7 10 H18 M7 13 H18" stroke="#aaa" stroke-width="0.6"/></svg><svg style="left:39px;top:382px" width="19" height="19"><path d="M2 17 L5 11 L13 2 C16 0 18 3 16 5 L8 14 Z" fill="none" stroke="#d4d4d4" stroke-width="1.5"/></svg><svg style="left:58px;top:398px" width="4" height="4"><path d="M4 0 L4 4 L0 4 Z" fill="#cfcfcf"/></svg><svg style="left:10px;top:403px" width="19" height="19"><path d="M5.5 11 V4 C5.5 2.8 7.3 2.8 7.3 4 V9 V2.2 C7.3 1 9.1 1 9.1 2.2 V9 V2.8 C9.1 1.6 10.9 1.6 10.9 2.8 V9 V4.5 C10.9 3.3 12.7 3.3 12.7 4.5 V11.5 L14.6 9.2 C15.5 8.2 17 9 16.3 10.2 L12.8 15.8 C12 17 10.5 18 8.5 18 C6.5 18 5.5 16.5 5 15 L2.2 10.5 C1.6 9.4 2.9 8.6 3.8 9.4 Z" fill="#d4d4d4"/></svg><svg style="left:30px;top:420px" width="4" height="4"><path d="M4 0 L4 4 L0 4 Z" fill="#cfcfcf"/></svg><svg style="left:39px;top:404px" width="18" height="18"><circle cx="7" cy="7" r="5.5" fill="none" stroke="#d4d4d4" stroke-width="1.6"/><path d="M11 11 L17 17" stroke="#d4d4d4" stroke-width="2"/></svg><div class="abs" style="left:24px;top:448px;width:33px;height:35px;border:1px solid #2a2a2a"></div><div class="abs" style="left:29px;top:453px;width:23px;height:25px;border:1px solid #2a2a2a"></div><div class="abs" style="left:6px;top:433px;width:34px;height:32px;background:#474747;border:1px solid #2a2a2a"></div><div class="t" style="left:18px;top:443px;font-size:12px;color:#ddd;font-family:'Liberation Serif',serif;font-weight:bold">?</div><div class="t" style="left:49px;top:467px;font-size:9px;color:#aaa;font-weight:bold">?</div><div class="t" style="left:26px;top:467px;font-size:9px;color:#aaa;font-weight:bold">?</div><div class="t" style="left:49px;top:445px;font-size:9px;color:#aaa;font-weight:bold">?</div><svg style="left:48px;top:434px" width="10" height="8"><path d="M1 6 C2 2 6 2 8 4 M6 1 L8 4 L5 5" stroke="#777" stroke-width="1.2" fill="none"/></svg><div class="abs" style="left:10px;top:474px;width:7px;height:7px;background:#fff;border:1px solid #111"></div><div class="abs" style="left:13px;top:477px;width:6px;height:6px;background:#111;border:1px solid #ddd"></div><div class="abs" style="left:9px;top:492px;width:12px;height:12px;background:#7ac143;border:1px solid #2a2a2a"></div><div class="abs" style="left:28px;top:492px;width:12px;height:12px;background:#eee;border:1px solid #2a2a2a"></div><div class="abs" style="left:46px;top:491px;width:13px;height:13px;background:#222"></div><svg style="left:47px;top:492px" width="11" height="11"><rect x="0" y="0" width="11" height="11" fill="#fff"/><path d="M0 11 L11 0" stroke="#e0202a" stroke-width="2"/></svg><div class="abs" style="left:7px;top:512px;width:17px;height:17px;background:#2b2b2b"></div><svg style="left:10px;top:514px" width="12" height="12"><circle cx="5" cy="5" r="4" fill="none" stroke="#cfcfcf" stroke-width="1.5"/><rect x="5" y="5" width="6" height="6" fill="#cfcfcf"/></svg><svg style="left:29px;top:514px" width="12" height="12"><circle cx="5" cy="5" r="4" fill="none" stroke="#aaa" stroke-width="1.5"/><rect x="5" y="5" width="6" height="6" fill="#aaa"/></svg><svg style="left:46px;top:514px" width="12" height="12"><circle cx="5" cy="5" r="4" fill="none" stroke="#666" stroke-width="1.5"/><rect x="5" y="5" width="6" height="6" fill="#666"/></svg><svg style="left:23px;top:537px" width="22" height="16"><rect x="7.5" y="0.5" width="13" height="10" fill="#888" stroke="#ddd"/><rect x="0.5" y="5.5" width="13" height="10" fill="#474747" stroke="#ddd"/></svg>
<div class="abs" style="left:305px;top:22px;width:176px;height:429px;background:#f0f0f0;border:1px solid #a6a6a6;box-shadow:2px 2px 3px rgba(0,0,0,0.35)"></div><div class="abs" style="left:306px;top:61.5px;width:174px;height:15px;background:#0a78d7"></div><div class="abs" style="left:309px;top:57px;width:170px;height:1px;background:#d7d7d7"></div><div class="abs" style="left:309px;top:79px;width:170px;height:1px;background:#d7d7d7"></div><div class="abs" style="left:309px;top:266px;width:170px;height:1px;background:#d7d7d7"></div><div class="mi" style="left:321px;top:27.3px;color:#1a1a1a">应用“内发光”(A)</div><div class="mi" style="right:740px;top:27.3px;font-size:10.8px">Shift+Ctrl+E</div><div class="mi" style="left:321px;top:41.6px;color:#1a1a1a">内发光...</div><div class="mi" style="right:740px;top:41.6px;font-size:10.8px">Alt+Shift+Ctrl+E</div><div class="mi" style="left:321px;top:64.4px;color:#ffffff">文档栅格效果设置(E)...</div><div class="mi" style="left:321px;top:87.2px;color:#9a9a9a">Illustrator 效果</div><div class="mi" style="left:326px;top:102.3px;color:#1a1a1a">3D(3)</div><div class="ar" style="left:470px;top:102.8px"></div><div class="mi" style="left:326px;top:118.8px;color:#1a1a1a">SVG 滤镜(G)</div><div class="ar" style="left:470px;top:119.2px"></div><div class="mi" style="left:326px;top:135.2px;color:#1a1a1a">变形(W)</div><div class="ar" style="left:470px;top:135.7px"></div><div class="mi" style="left:326px;top:151.6px;color:#1a1a1a">扭曲和变换(D)</div><div class="ar" style="left:470px;top:152.1px"></div><div class="mi" style="left:326px;top:168.1px;color:#1a1a1a">栅格化(R)...</div><div class="mi" style="left:326px;top:184.6px;color:#1a1a1a">裁剪标记(O)</div><div class="mi" style="left:326px;top:201.0px;color:#1a1a1a">路径(P)</div><div class="ar" style="left:470px;top:201.5px"></div><div class="mi" style="left:326px;top:217.4px;color:#1a1a1a">路径查找器(F)</div><div class="ar" style="left:470px;top:217.9px"></div><div class="mi" style="left:326px;top:233.9px;color:#1a1a1a">转换为形状(V)</div><div class="ar" style="left:470px;top:234.4px"></div><div class="mi" style="left:326px;top:250.3px;color:#1a1a1a">风格化(S)</div><div class="ar" style="left:470px;top:250.8px"></div><div class="mi" style="left:321px;top:273.0px;color:#9a9a9a">Photoshop 效果</div><div class="mi" style="left:326px;top:289.5px;color:#1a1a1a">效果画廊...</div><div class="mi" style="left:326px;top:305.9px;color:#1a1a1a">像素化</div><div class="ar" style="left:470px;top:306.4px"></div><div class="mi" style="left:326px;top:322.4px;color:#1a1a1a">扭曲</div><div class="ar" style="left:470px;top:322.9px"></div><div class="mi" style="left:326px;top:338.9px;color:#1a1a1a">模糊</div><div class="ar" style="left:470px;top:339.4px"></div><div class="mi" style="left:326px;top:355.3px;color:#1a1a1a">画笔描边</div><div class="ar" style="left:470px;top:355.8px"></div><div class="mi" style="left:326px;top:371.8px;color:#1a1a1a">素描</div><div class="ar" style="left:470px;top:372.2px"></div><div class="mi" style="left:326px;top:388.2px;color:#1a1a1a">纹理</div><div class="ar" style="left:470px;top:388.7px"></div><div class="mi" style="left:326px;top:404.6px;color:#1a1a1a">艺术效果</div><div class="ar" style="left:470px;top:405.1px"></div><div class="mi" style="left:326px;top:421.1px;color:#1a1a1a">视频</div><div class="ar" style="left:470px;top:421.6px"></div><div class="mi" style="left:326px;top:437.5px;color:#1a1a1a">风格化</div><div class="ar" style="left:470px;top:438.0px"></div>
<svg width="1200" height="593" style="left:0;top:0"><path d="M136.5 133.0 L295.6 28.6" stroke="#e8161b" stroke-width="4" stroke-linecap="round"/><path d="M314.0 16.5 L296.7 37.5 L296.4 28.0 L287.9 24.1 Z" fill="#e8161b"/><path d="M263.5 113.5 L314.8 86.0" stroke="#e8161b" stroke-width="4" stroke-linecap="round"/><path d="M331.5 77.0 L314.5 94.0 L315.6 85.5 L307.9 81.7 Z" fill="#e8161b"/></svg>
</body></html>
